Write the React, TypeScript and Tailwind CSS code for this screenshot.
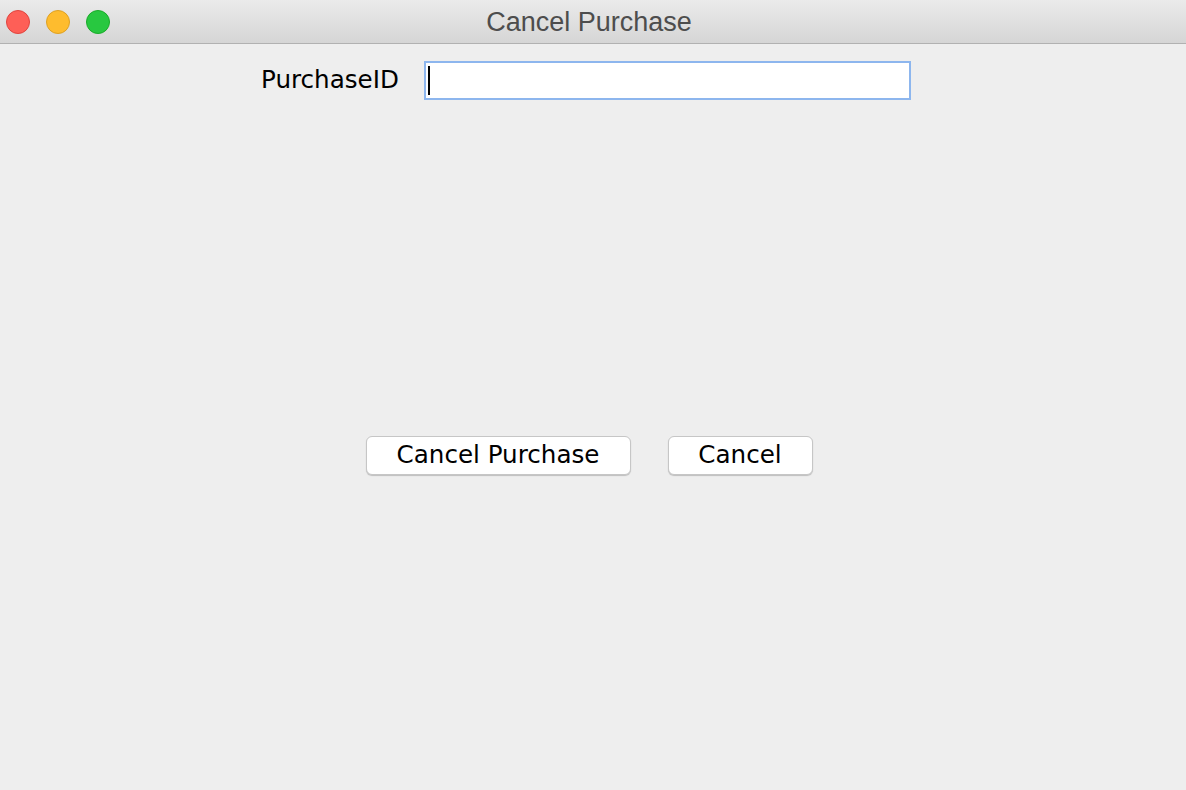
export default function App() {
  return (
    <div className="w-[1186px] h-[790px] bg-[#eeeeee] flex flex-col overflow-hidden">
      <div className="h-[44px] shrink-0 bg-gradient-to-b from-[#ebebeb] to-[#d5d5d5] border-b border-[#b1b1b1] flex items-center relative">
        <div className="flex items-center gap-[16px] pl-[6px]">
          <div className="w-[24px] h-[24px] rounded-full bg-[#fe5f57] border border-[#e0443e]" />
          <div className="w-[24px] h-[24px] rounded-full bg-[#febc2e] border border-[#dea123]" />
          <div className="w-[24px] h-[24px] rounded-full bg-[#28c840] border border-[#1aab29]" />
        </div>
        <div className="absolute inset-0 flex items-center justify-center pr-[8px] pt-[2px] text-[27px] text-[#4d4d4d] font-['Liberation_Sans',sans-serif]">
          Cancel Purchase
        </div>
      </div>
      <div className="flex flex-col font-['DejaVu_Sans',sans-serif]">
        <div className="flex items-center mt-[17px] pl-[261px]">
          <span className="text-[24.6px] text-black leading-none w-[163px]">PurchaseID</span>
          <div className="w-[487px] h-[39px] bg-white border-2 border-[#8db6ee] flex items-center pl-[2px]">
            <div className="w-[2px] h-[29px] bg-black" />
          </div>
        </div>
        <div className="flex justify-center gap-[37px] mt-[336px] pr-[8px]">
          <button className="w-[265px] h-[39px] bg-white rounded-[6px] border border-[#c6c6c6] shadow-[0_1px_1px_rgba(0,0,0,0.2)] text-[24.6px] text-black leading-none">
            Cancel Purchase
          </button>
          <button className="w-[145px] h-[39px] bg-white rounded-[6px] border border-[#c6c6c6] shadow-[0_1px_1px_rgba(0,0,0,0.2)] text-[24.6px] text-black leading-none">
            Cancel
          </button>
        </div>
      </div>
    </div>
  );
}
